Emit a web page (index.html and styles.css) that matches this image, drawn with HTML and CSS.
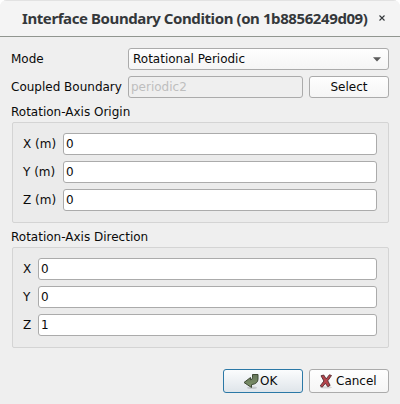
FILE: index.html
```html
<!DOCTYPE html>
<html lang="en">
<head>
<meta charset="utf-8">
<title>Interface Boundary Condition</title>
<link rel="stylesheet" href="styles.css">
</head>
<body>
<div class="window">
  <header class="titlebar">
    <h1 class="title">Interface Boundary Condition (on 1b8856249d09)</h1>
    <svg class="close" width="6" height="6" viewBox="0 0 6 6"><path d="M.5.5l5 5M5.5.5l-5 5"/></svg>
  </header>
  <main class="content">
    <div class="row">
      <span class="label wide">Mode</span>
      <div class="combo"><span>Rotational Periodic</span>
        <svg width="8" height="5" viewBox="0 0 8 5"><path d="M0 .3h8L4 4.5z" fill="#5b5b5b"/></svg>
      </div>
    </div>
    <div class="row">
      <span class="label wide">Coupled Boundary</span>
      <div class="field disabled">periodic2</div>
      <div class="button select">Select</div>
    </div>
    <div class="caption">Rotation-Axis Origin</div>
    <section class="group origin">
      <div class="row"><span class="label">X (m)</span><div class="field">0</div></div>
      <div class="row"><span class="label">Y (m)</span><div class="field">0</div></div>
      <div class="row"><span class="label">Z (m)</span><div class="field">0</div></div>
    </section>
    <div class="caption">Rotation-Axis Direction</div>
    <section class="group direction">
      <div class="row"><span class="label">X</span><div class="field">0</div></div>
      <div class="row"><span class="label">Y</span><div class="field">0</div></div>
      <div class="row"><span class="label">Z</span><div class="field">1</div></div>
    </section>
    <footer class="actions">
      <div class="button ok">
        <svg width="16" height="16" viewBox="0 0 16 16">
          <defs><linearGradient id="g" x1="0" y1="0" x2="0" y2="1"><stop offset="0" stop-color="#65755a"/><stop offset="1" stop-color="#7f956b"/></linearGradient></defs>
          <ellipse cx="9" cy="14.8" rx="5" ry="1.2" fill="#000" opacity=".13"/>
          <path d="M9.500 1.500h5.500v4.500q0 4.800-6.500 5.600v2.900L1 9.500l6.500-5v2.300q2-.2 2-2z" fill="url(#g)" stroke="#3f4a36" stroke-linejoin="round"/>
        </svg><span>OK</span>
      </div>
      <div class="button cancel">
        <svg width="16" height="16" viewBox="0 0 16 16">
          <ellipse cx="8" cy="14.400" rx="6" ry="1.200" fill="#000" opacity=".13"/>
          <path d="M3 2.800l2.700-.8 2.500 3.900 3.200-4.100 2.100.7-3.700 5.300 2.300 4.600-2.300 1.300-2.400-3.400-3.200 3.900-2-1.300 3.700-4.900z" fill="#b5444b" stroke="#562d32" stroke-width=".9" stroke-linejoin="round"/>
        </svg><span>Cancel</span>
      </div>
    </footer>
  </main>
</div>
</body>
</html>
```

FILE: styles.css
```css
* { box-sizing: border-box; }
body {
  margin: 0;
  background: #fff;
  font: 12px/14px "DejaVu Sans", sans-serif;
  color: #0a0a0a;
}
.window {
  width: 400px;
  height: 404px;
  background: #efefef;
  border-radius: 7px 7px 0 0;
  overflow: hidden;
}
.titlebar {
  height: 37px;
  display: flex;
  align-items: center;
  padding: 0 0 1px 22px;
  background: #f4f4f4;
  border-top: 1px solid #e2e2e2;
  border-bottom: 1px solid #919690;
}
.title {
  margin: 0;
  width: 346px;
  white-space: nowrap;
  font: bold 15px/20px "Noto Sans", sans-serif;
  letter-spacing: -0.41px;
  color: #34383b;
}
.close {
  margin-left: 11px;
  stroke: #34383b;
  stroke-width: 1.1;
}
.content {
  padding: 11px 11px 0;
}
.row {
  display: flex;
  height: 22px;
  margin-bottom: 6px;
}
.label {
  line-height: 22px;
  white-space: nowrap;
}
.wide { width: 117px; }
.combo, .field, .button {
  height: 22px;
  border: 1px solid #ababab;
  border-radius: 3px;
  line-height: 20px;
}
.combo {
  flex: 1;
  display: flex;
  align-items: center;
  justify-content: space-between;
  padding: 0 7px 0 4px;
  background: linear-gradient(#fefefe, #f5f5f5);
}
.field {
  flex: 1;
  padding-left: 2px;
  background: #fff;
}
.disabled {
  flex: none;
  width: 175px;
  background: #efefef;
  color: #bebebe;
}
.button {
  width: 80px;
  display: flex;
  align-items: center;
  justify-content: center;
  background: linear-gradient(#fefefe, #f5f5f5);
}
.select { margin-left: 6px; }
.caption {
  height: 18px;
  padding-top: 1px;
}
.group {
  height: 101px;
  margin: 0 0 6px 1px;
  padding: 10px 11px 0 10px;
  background: #ebebeb;
  border: 1px solid #d4d4d4;
  border-radius: 2px;
}
.origin .label { width: 40px; }
.direction .label { width: 15px; }
.actions {
  display: flex;
  justify-content: flex-end;
  gap: 6px;
  margin-top: 21px;
}
.actions .button {
  height: 24px;
  line-height: 22px;
  justify-content: flex-start;
}
.actions svg { margin-top: -1px; }
.ok {
  padding-left: 19px;
  border-color: #2b78a6;
  background: linear-gradient(#fbfcfd, #dfe5ea);
}
.ok span { margin-left: 1px; }
.cancel { padding-left: 8px; }
.cancel span { margin-left: 2px; }
```
